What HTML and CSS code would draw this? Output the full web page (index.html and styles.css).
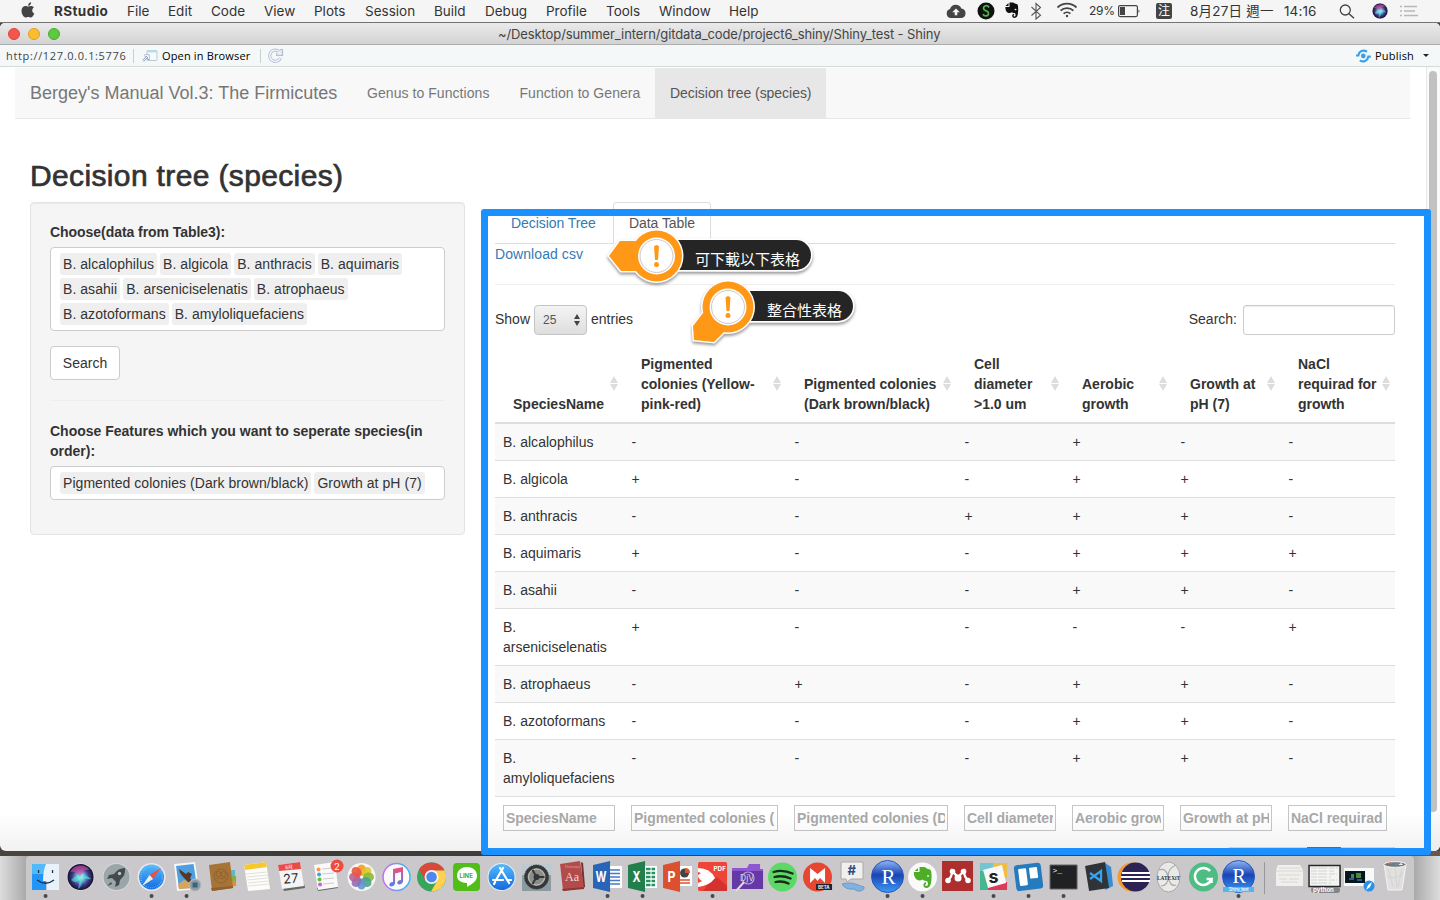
FILE: index.html
```html
<!DOCTYPE html>
<html lang="en">
<head>
<meta charset="utf-8">
<title>Shiny</title>
<link rel="stylesheet" href="styles.css">
</head>
<body>
<header class="menubar">
  <svg class="apple" viewBox="0 0 14 16"><path fill="#444" d="M9.3 2.7C10 1.900 10.200 1 10.100.2 8.600.4 7 1.700 7.200 3.900 8 3.900 8.800 3.400 9.300 2.700ZM7.300 4.500C6.400 4.500 5.700 3.900 4.500 3.900 2.400 3.900.5 5.600.5 8.800.5 12 2.700 15.500 4.500 15.500 5.500 15.500 6.100 14.900 7.300 14.900S9 15.500 9.900 15.500C11.500 15.500 12.800 12.900 13.300 11.500 10.700 10.300 10.600 6.900 12.900 5.500 11.200 3.300 8.900 3.900 7.300 4.500Z"/></svg>
  <nav class="menus"><b>RStudio</b><span>File</span><span>Edit</span><span>Code</span><span>View</span><span>Plots</span><span>Session</span><span>Build</span><span>Debug</span><span>Profile</span><span>Tools</span><span>Window</span><span>Help</span></nav>
  <div class="status">
    <svg width="22" height="22" viewBox="0 0 22 22"><path fill="#444" d="M6 18a4.600 4.600 0 0 1-1-9 6 6 0 0 1 11.300-.5A4.800 4.800 0 0 1 16.500 18Z"/><path fill="#f5f5f5" d="m11 8.500 3.800 3.800h-2.500v3H9.700v-3H7.200Z"/></svg>
    <svg width="18" height="22" viewBox="0 0 18 22"><circle cx="9" cy="11" r="8.500" fill="#111"/><path d="M12 7.500C10 4 5 6.500 7 9.500c1 1.500 5 1.500 4.500 4.500-.5 2.500-4.500 2.500-5.500.2" fill="none" stroke="#4db848" stroke-width="1.700"/></svg>
    <svg width="16" height="22" viewBox="0 0 16 22"><path fill="#111" d="M5.500 2.500h3.300c1.400 0 1.500 1 2.800 1.200 2.200.3 2.600 1 2.600 5.300 0 6-.7 9-3.700 9-3 0-3.200-4-.4-4.200v1.400c-1 0-1 1.300.3 1.300 1.600 0 1.500-3 .2-3.400-1.200-.3-2.400-.2-2.900-.8-1.200 1.500-4.900.8-5.700-1.600C1.500 9.200 1.200 8 1.500 7H5.500ZM4.500 3V6.100H1.500Z"/><ellipse cx="11.500" cy="9.500" rx="1" ry=".7" fill="#f5f5f5"/></svg>
    <svg width="12" height="22" viewBox="0 0 12 22"><path d="m1.500 7 9 8.200L6 19V3.500l4.500 4-9 8" fill="none" stroke="#555" stroke-width="1.100"/></svg>
    <svg width="22" height="22" viewBox="0 0 22 22" fill="none" stroke="#444" stroke-width="1.800"><path d="M1.500 7.500a13.500 13.500 0 0 1 19 0M4.600 10.700a9.200 9.200 0 0 1 12.800 0M7.600 13.700a5 5 0 0 1 6.800 0"/><circle cx="11" cy="16" r="1.200" fill="#444" stroke="none"/></svg>
    <span class="pct">29%</span>
    <svg width="24" height="22" viewBox="0 0 24 22"><rect x=".6" y="5.600" width="18.800" height="11" rx="1.500" fill="none" stroke="#444" stroke-width="1.200"/><path fill="#444" d="M2 7h5v8H2zM20.500 9.500q2 1.500 0 3.500z"/></svg>
    <span class="ime">注</span>
    <span class="date">8月27日 週一</span>
    <span class="time">14:16</span>
    <svg width="16" height="22" viewBox="0 0 16 22"><circle cx="6.300" cy="10" r="5" fill="none" stroke="#444" stroke-width="1.300"/><path d="m10 13.800 5 4.500" stroke="#444" stroke-width="1.500"/></svg>
    <svg width="18" height="22" viewBox="0 0 18 22"><use href="#siri" x="-5" y="-6" transform="matrix(.58 0 0 .58 1.800 2.300)"/></svg>
    <svg width="20" height="22" viewBox="0 0 20 22"><path d="M5 6.500h13M5 11h11M5 15.500h14M1 6.500h2M1 11h2M1 15.500h2" stroke="#b8b8b8" stroke-width="1.500"/></svg>
  </div>
</header>

<main class="window">
  <div class="titlebar"><i class="light red"></i><i class="light yellow"></i><i class="light green"></i><span class="title">~/Desktop/summer_intern/gitdata_code/project6_shiny/Shiny_test - Shiny</span></div>
  <div class="toolbar">
    <span class="url">http://127.0.0.1:5776</span><i class="sep"></i>
    <svg width="16" height="14" viewBox="0 0 16 14"><rect x="5" y="1.500" width="10" height="10" rx="1" fill="#f7fafb" stroke="#b9cad5"/><path d="M5 2.500h10" stroke="#b5dff1" stroke-width="2"/><path d="M1 12 6 7M2.500 6.500H6.500V11" fill="none" stroke="#91a4bc" stroke-width="2.200"/><path d="M1 12 6 7M3 6.500H6.500V10" fill="none" stroke="#edf4f8"/></svg>
    <span class="open">Open in Browser</span><i class="sep"></i>
    <svg width="17" height="16" viewBox="0 0 17 16"><path d="M13.500 9.800A5.600 5.600 0 1 1 12 3.500M14.500 1v5.500H9" fill="none" stroke="#b4c0d5" stroke-width="3.200"/><path d="M13.500 9.800A5.600 5.600 0 1 1 12 3.500M14 2v4h-4" fill="none" stroke="#f2f7fb" stroke-width="1.400"/></svg>
    <div class="publish"><svg width="17" height="14" viewBox="0 0 17 14"><circle cx="8.300" cy="7" r="2.400" fill="#3aa0e8"/><path d="M1 6.500h2.300C4 2.200 8 .3 12 2.800M15.800 7.700h-2.500C12.500 11.800 8.500 13.700 4.800 11.300" fill="none" stroke="#3aa0e8" stroke-width="2.200"/></svg><span>Publish</span><i class="caret"></i></div>
  </div>
  <div class="viewport">
    <div class="page">
      <nav class="navbar"><span class="brand">Bergey's Manual Vol.3: The Firmicutes</span><a class="l1">Genus to Functions</a><a class="l2">Function to Genera</a><a class="active">Decision tree (species)</a></nav>
      <h2>Decision tree (species)</h2>
      <div class="row">
        <aside class="well">
          <label>Choose(data from Table3):</label>
          <div class="selectize"><span>B. alcalophilus</span><span>B. algicola</span><span>B. anthracis</span><span>B. aquimaris</span><span>B. asahii</span><span>B. arseniciselenatis</span><span>B. atrophaeus</span><span>B. azotoformans</span><span>B. amyloliquefaciens</span></div>
          <button class="btn">Search</button>
          <hr>
          <label>Choose Features which you want to seperate species(in order):</label>
          <div class="selectize"><span>Pigmented colonies (Dark brown/black)</span><span>Growth at pH (7)</span></div>
        </aside>
        <section class="panel">
          <div class="tabs"><a>Decision Tree</a><a class="on">Data Table</a></div>
          <a class="download">Download csv</a>
          <hr>
          <div class="controls"><span class="word">Show</span><div class="select">25<svg width="6" height="12" viewBox="0 0 6 12"><path fill="#444" d="M3 0 6 5H0ZM0 7h6L3 12Z"/></svg></div><span class="word">entries</span><span class="word slabel">Search:</span><div class="sinput"></div></div>
          <table>
            <colgroup><col class="c1"><col class="c2"><col class="c3"><col class="c4"><col class="c4"><col class="c4"><col class="c7"></colgroup>
            <thead><tr><th>SpeciesName</th><th>Pigmented<br>colonies (Yellow-<br>pink-red)</th><th>Pigmented colonies<br>(Dark brown/black)</th><th>Cell<br>diameter<br>&gt;1.0 um</th><th>Aerobic<br>growth</th><th>Growth at<br>pH (7)</th><th>NaCl<br>requirad for<br>growth</th></tr></thead>
            <tbody>
              <tr><td>B. alcalophilus</td><td>-</td><td>-</td><td>-</td><td>+</td><td>-</td><td>-</td></tr>
              <tr><td>B. algicola</td><td>+</td><td>-</td><td>-</td><td>+</td><td>+</td><td>-</td></tr>
              <tr><td>B. anthracis</td><td>-</td><td>-</td><td>+</td><td>+</td><td>+</td><td>-</td></tr>
              <tr><td>B. aquimaris</td><td>+</td><td>-</td><td>-</td><td>+</td><td>+</td><td>+</td></tr>
              <tr><td>B. asahii</td><td>-</td><td>-</td><td>-</td><td>+</td><td>+</td><td>-</td></tr>
              <tr><td>B.<br>arseniciselenatis</td><td>+</td><td>-</td><td>-</td><td>-</td><td>-</td><td>+</td></tr>
              <tr><td>B. atrophaeus</td><td>-</td><td>+</td><td>-</td><td>+</td><td>+</td><td>-</td></tr>
              <tr><td>B. azotoformans</td><td>-</td><td>-</td><td>-</td><td>+</td><td>+</td><td>-</td></tr>
              <tr><td>B.<br>amyloliquefaciens</td><td>-</td><td>-</td><td>-</td><td>+</td><td>+</td><td>-</td></tr>
            </tbody>
            <tfoot><tr><td><div class="filter"><span>SpeciesName</span></div></td><td><div class="filter"><span>Pigmented colonies (</span></div></td><td><div class="filter"><span>Pigmented colonies (D</span></div></td><td><div class="filter"><span>Cell diameter</span></div></td><td><div class="filter"><span>Aerobic grow</span></div></td><td><div class="filter"><span>Growth at pH</span></div></td><td><div class="filter"><span>NaCl requirad</span></div></td></tr></tfoot>
          </table>
          <div class="pager"><i></i></div>
        </section>
      </div>
    </div>
    <div class="scroll"><i></i></div>
    <div class="shade"></div>
  </div>
</main>

<footer class="desktop">
  <div class="dock">
    <svg viewBox="0 0 35 44"><path fill="#2196f8" d="M4 8h14v26H4z"/><path fill="#52baf9" d="M4 8h14v10H4z"/><path fill="#e9f1fa" d="M18 8h13v26H19q0-5-.5-9h-3.500Q15 14 18 8Z"/><path d="M10.500 14v3M24.500 14v3M9 24q8.500 6.500 17 0" fill="none" stroke="#173452" stroke-width="1.300"/><circle cx="17.500" cy="40" r="2" fill="#4a484b"/></svg>
    <svg viewBox="0 0 35 44"><defs><radialGradient id="sg"><stop offset="0" stop-color="#fff"/><stop offset=".3" stop-color="#65c6de"/><stop offset=".65" stop-color="#423787"/><stop offset="1" stop-color="#10122d"/></radialGradient><linearGradient id="blue" x2="0" y2="1"><stop stop-color="#55baf7"/><stop offset="1" stop-color="#126be2"/></linearGradient><linearGradient id="rb" x2="0" y2="1"><stop stop-color="#8eb8f5"/><stop offset=".45" stop-color="#1b43b5"/><stop offset="1" stop-color="#3b9cf5"/></linearGradient></defs><g id="siri"><circle cx="17.500" cy="21" r="13.800" fill="#d8d8dc"/><circle cx="17.500" cy="21" r="13" fill="url(#sg)"/><path fill="#e349a2" opacity=".6" d="M7 16q5-8 14-6 5 2 5 4-5-2-9 7-4-6-10-5Z"/><path fill="#55e5d8" opacity=".6" d="M17 20q-6 0-9 4 5 5 9-2l-2 11q5-3 4-12 4 3 9 2-4-5-11-3Z"/></g></svg>
    <svg viewBox="0 0 35 44"><circle cx="17.500" cy="21" r="14" fill="#d3d7d7"/><circle cx="17.500" cy="21" r="13" fill="#9ba6a8"/><path fill="#444b50" d="M26 12q-7 0-11 6l-5 1-2 4 5-1 4 4-1 5 4-2 1-5q6-5 5-12ZM12 26l-4 4 5-2Z"/><circle cx="20.500" cy="17.500" r="1.700" fill="#bbc4c5"/></svg>
    <svg viewBox="0 0 35 44"><circle cx="17.500" cy="21" r="14" fill="#e7e9ed"/><circle cx="17.500" cy="21" r="12.500" fill="url(#blue)"/><circle cx="17.500" cy="21" r="10.800" fill="none" stroke="#8cceff" stroke-width="1.500" stroke-dasharray=".5 1.500"/><path fill="#ef4d45" d="m27 12-8 11-3.500-4Z"/><path fill="#eee" d="M8 30l7.500-11 3.500 4Z"/><circle cx="17.500" cy="40" r="2" fill="#4a484b"/></svg>
    <svg viewBox="0 0 35 44"><path fill="#f7f7f4" d="m5 8 21-2 4 27-22 2Z"/><path fill="#4e9fdf" d="m7 10 17.500-2 3.500 23-18 2Z"/><path fill="#d5a55d" d="m9 28 6-4 9 4 3 4-17 1Z"/><path fill="#573725" d="m10 13 7 5 2-2 4 2-2 4 3 5-5-1-5-5-3-4Z"/><circle cx="26" cy="29" r="5.800" fill="#8c9aa3" stroke="#b4b4b6" stroke-width="1.200"/><path fill="#37677f" d="M23.500 26.500h5v5h-5z"/><circle cx="17.500" cy="40" r="2" fill="#4a484b"/></svg>
    <svg viewBox="0 0 35 44"><path fill="#5bb9cf" d="M27 14h4v6h-4z"/><path fill="#88ad3f" d="M27 20h5v5h-4z"/><path fill="#e58c35" d="M28 25h4v5h-4z"/><path fill="#a67437" d="m5 9 21-3 3 26-21 3Z"/><path fill="#8e602c" d="m7 32 22-2v2L8 35Z"/><g fill="none" stroke="#8b602f" stroke-width=".8"><circle cx="17" cy="20" r="7"/><circle cx="14.500" cy="18" r="2.500"/><circle cx="19.500" cy="18" r="2.500"/><path d="M11 24q3-4 6-1 4-3 6 0"/></g></svg>
    <svg viewBox="0 0 35 44"><path fill="#fdfcf8" d="m5 9 22-3 4 27-22 2Z"/><path fill="#f7c72e" d="m5 9 22-3 .8 5L6 14Z"/><path stroke="#d9d9d6" stroke-width=".8" d="m7 18 21-2M8 21l21-2M8 24l21-2M9 27l21-2M9 30l21-2"/></svg>
    <svg viewBox="0 0 35 44"><path fill="#68686a" d="m8 30 22-2 1 4-21 3Z"/><path fill="#f5f5f5" d="m4 9 22-3 4 24-22 3Z"/><path fill="#e84b48" d="m4 9 22-3 1 7-22 2Z"/><text x="11" y="13" fill="#fff" font-size="5" transform="rotate(-5 15 12)" class="cjk">8月</text><text x="9" y="27" font-size="13" fill="#333" transform="rotate(-5 17 22)" class="ui">27</text></svg>
    <svg viewBox="0 0 35 44"><path fill="#666" d="m8 32 20-2 1 2-20 3Z"/><path fill="#fafafa" d="m5 9 21-3 3 25-20 3Z"/><path stroke="#ccc" d="m13 13 12-1M13 18l12-1M14 23l11-1M14 28l11-1"/><circle cx="9.500" cy="13.500" r="2" fill="#ff9634"/><circle cx="10" cy="18.500" r="2" fill="#37a8e8"/><circle cx="10.500" cy="23.500" r="2" fill="#66bd36"/><circle cx="11" cy="28.500" r="2" fill="#bf69d7"/><circle cx="28" cy="10" r="6.500" fill="#f14b3f"/><text x="25" y="13.500" fill="#fff" font-size="9.500" class="ui">2</text></svg>
    <svg viewBox="0 0 35 44"><circle cx="17.500" cy="21" r="14" fill="#f7f7f7"/><g fill-opacity=".9"><ellipse cx="17.500" cy="14" rx="4.500" ry="5.500" fill="#f89925"/><ellipse cx="17.500" cy="14" rx="4.500" ry="5.500" fill="#dfc72b" transform="rotate(45 17.500 21)"/><ellipse cx="17.500" cy="14" rx="4.500" ry="5.500" fill="#8cb83d" transform="rotate(90 17.500 21)"/><ellipse cx="17.500" cy="14" rx="4.500" ry="5.500" fill="#4aa582" transform="rotate(135 17.500 21)"/><ellipse cx="17.500" cy="14" rx="4.500" ry="5.500" fill="#6098cc" transform="rotate(180 17.500 21)"/><ellipse cx="17.500" cy="14" rx="4.500" ry="5.500" fill="#8a71b7" transform="rotate(225 17.500 21)"/><ellipse cx="17.500" cy="14" rx="4.500" ry="5.500" fill="#bd5f92" transform="rotate(270 17.500 21)"/><ellipse cx="17.500" cy="14" rx="4.500" ry="5.500" fill="#e9573f" transform="rotate(315 17.500 21)"/></g></svg>
    <svg viewBox="0 0 35 44"><defs><linearGradient id="tune" x2="0" y2="1"><stop stop-color="#f54d77"/><stop offset="1" stop-color="#4d83f2"/></linearGradient><linearGradient id="ring"><stop stop-color="#c76df1"/><stop offset="1" stop-color="#37bbee"/></linearGradient></defs><circle cx="17.500" cy="21" r="13.500" fill="#fafafa" stroke="url(#ring)" stroke-width="1.500"/><path fill="url(#tune)" d="M14 13 24 11v14.500q-1 3-4 3-3-1-1-3.500 1-1 3-1V16l-6 1.500v10q-1 3-4 3-3-1-1-3.500 1-1 3-1Z"/></svg>
    <svg viewBox="0 0 35 44"><circle cx="17.500" cy="21" r="14.500" fill="#39a55a"/><path fill="#d9483c" d="M5 13.600A14.500 14.500 0 0 1 30 13.600L30 15H18L11.500 25Z"/><path fill="#ffd151" d="M30.500 14.500A14.500 14.500 0 0 1 17 35.500l6.500-11.500q2-6-5-9.500Z"/><circle cx="17.500" cy="21" r="7" fill="#f4f4f4"/><circle cx="17.500" cy="21" r="5.300" fill="#4c88ef"/></svg>
    <svg viewBox="0 0 35 44"><rect x="4" y="7" width="27" height="28" rx="4" fill="#50bd18"/><path fill="#fff" d="M8 20c0-12 20-12 20 0 0 5-5 8-10 11v-4C12 27 8 24 8 20Z"/><text x="10.500" y="22" font-size="6" font-weight="bold" fill="#50a91e" class="ui">LINE</text></svg>
    <svg viewBox="0 0 35 44"><circle cx="17.500" cy="21" r="14" fill="#e8edf2"/><circle cx="17.500" cy="21" r="13" fill="url(#blue)"/><path d="m16 12 9 15M19 12l-7 12M11 26l-1 2M9 24h10M23 24h4" fill="none" stroke="#fff" stroke-width="2.200" stroke-linecap="round"/></svg>
    <svg viewBox="0 0 35 44"><path fill="#8c9ba1" d="M3 8h29v27H3z"/><path fill="#bdc9ce" d="M3 8h29v11H3z"/><circle cx="17.500" cy="21" r="10.500" fill="#8c8c88" stroke="#343637" stroke-width="3"/><circle cx="17.500" cy="21" r="12" fill="none" stroke="#343637" stroke-dasharray="1.500 1"/><circle cx="17.500" cy="21" r="8" fill="none" stroke="#c2c2be"/><circle cx="17.500" cy="21" r="3" fill="#343637"/><path d="m17.500 21 8 0M17.500 21l-4-7M17.500 21l-4 7" stroke="#343637" stroke-width="2"/></svg>
    <svg viewBox="0 0 35 44"><path fill="#762f31" d="m26 6 2 1 2 24-2 1Z"/><path fill="#b34b4b" d="m5 8 20-3 4 27-21 3Z"/><path fill="#8d3537" d="m7 33 22-2v2L8 35Z"/><text x="10" y="25" font-size="12" fill="#f1dada" class="serif">Aa</text><text x="10" y="12" font-size="3.500" fill="#e0a3a1" class="serif">Dictionary</text></svg>
    <svg viewBox="0 0 35 44"><path fill="#fff" d="M18 10h14v22H18z"/><path d="M20 14h10M20 17.500h10M20 21h10M20 24.500h10M20 28h10" stroke="#477ac3" stroke-width="1.500"/><path fill="#2865b6" d="m3 9 17-4v31L3 32Z"/><text x="5.500" y="26" font-size="14" font-weight="bold" fill="#fff" class="ui" textLength="11" lengthAdjust="spacingAndGlyphs">W</text><circle cx="17.500" cy="40" r="2" fill="#4a484b"/></svg>
    <svg viewBox="0 0 35 44"><path fill="#fff" d="M18 10h14v22H18z"/><path d="M21 13h9M21 17h9M21 21h9M21 25h9M21 29h9" stroke="#279260" stroke-width="2.500"/><path d="M26 10v22" stroke="#fff"/><path fill="#227f4b" d="m3 9 17-4v31L3 32Z"/><text x="7.500" y="26" font-size="14" font-weight="bold" fill="#fff" class="ui" textLength="8" lengthAdjust="spacingAndGlyphs">X</text><circle cx="17.500" cy="40" r="2" fill="#4a484b"/></svg>
    <svg viewBox="0 0 35 44"><path fill="#fff" d="M18 10h14v20H18z"/><circle cx="24.500" cy="17" r="4.500" fill="#444"/><path fill="#dd5234" d="M25 17v-5q5 0 5 5Z"/><path d="M20 24h10M20 27h10" stroke="#dd5234" stroke-width="1.300"/><path fill="#db5030" d="m3 9 17-4v31L3 32Z"/><text x="7.500" y="26" font-size="14" font-weight="bold" fill="#fff" class="ui" textLength="8" lengthAdjust="spacingAndGlyphs">P</text></svg>
    <svg viewBox="0 0 35 44"><rect x="3" y="6" width="29" height="29" rx="1.500" fill="#ef4438"/><path fill="#d3332c" d="m13 28 9-7 10 9v5H8Z"/><path d="M3 12q12 0 17 10-6 8-17 9v-4l4-2Q3 23 3 19l3-2-3-1Z" fill="#fff"/><text x="18.500" y="14.500" font-size="6.300" font-weight="bold" fill="#fff" class="ui">PDF</text><circle cx="17.500" cy="40" r="2" fill="#4a484b"/></svg>
    <svg viewBox="0 0 35 44"><path fill="#9055d3" d="M2 12h15l2-4h11v5h3v20H2Z"/><path fill="#6538a5" d="M2 15h31v18H2Z"/><text x="10" y="25" font-size="8.500" fill="#ddd" class="ui">DjV</text><circle cx="18" cy="22" r="6" fill="none" stroke="#b8a4e2" stroke-width="1.200"/><path d="M14 26 6 35" stroke="#ddd" stroke-width="2"/></svg>
    <svg viewBox="0 0 35 44"><circle cx="17.500" cy="21" r="14.500" fill="#5bd866"/><path d="M8.500 16q9-3 19 1.500M9.500 21q8-2 16 1.500M10.500 26q7-1.500 13 1.500" fill="none" stroke="#172a1b" stroke-width="2.300" stroke-linecap="round"/></svg>
    <svg viewBox="0 0 35 44"><circle cx="17.500" cy="21" r="14.500" fill="#e94632"/><path fill="#fff" d="m10 12 7.500 6 7.500-6v15l-5-5-2.500 3-2.500-3-5 5Z"/><path fill="#23242a" d="M16 28h16v6H16z"/><text x="18" y="33" font-size="4.500" font-weight="bold" fill="#eee" class="ui">BETA</text></svg>
    <svg viewBox="0 0 35 44"><path fill="#f0f0ee" stroke="#aaa" d="M6 6h22v17H16l-4 3-1-3H6Z"/><text x="12.500" y="19" font-size="13" font-weight="bold" fill="#2e4d82" class="ui">#</text><path d="M7 28q9-2 13 0 6 2 9 3 1 2-3 4-4 1-7-2-9 1-12-5Z" fill="#83b1dd" stroke="#6c9bc7"/></svg>
    <svg viewBox="0 0 35 44"><circle cx="17.500" cy="20.500" r="16" fill="url(#rb)" stroke="#2356bf"/><text x="11.500" y="28" font-size="21" fill="#fff" class="serif">R</text><circle cx="17.500" cy="40" r="2" fill="#4a484b"/></svg>
    <svg viewBox="0 0 35 44"><circle cx="17.500" cy="21" r="14.500" fill="#fafafa"/><path fill="#4ead27" d="M14.500 11h4.500c1.500 0 2 1.500 4 2 3 .5 3.500 1.500 3.500 7 0 7-1 12-5 12s-4-5.500-.5-6v2c-1.200 0-1.200 2 .3 2 2.500 0 2-4.500 0-5-2-.4-3-.5-3.800-1.500-2.500 2-6.500 1-8-3-.5-1.500-1-3-.5-4.500h5.500ZM13 12v3H9.500Z"/><ellipse cx="23" cy="20" rx="1.200" ry=".8" fill="#fff"/><circle cx="17.500" cy="40" r="2" fill="#4a484b"/></svg>
    <svg viewBox="0 0 35 44"><path fill="#ae2d2d" d="M2 5h31v30H2z"/><path d="M8 24q4-3 4-9l6 6 6-6q0 6 4 9" fill="none" stroke="#fff" stroke-width="2.300"/><g fill="#fff"><circle cx="8" cy="24.500" r="2.800"/><circle cx="12.500" cy="15.500" r="2.800"/><circle cx="18" cy="22" r="3.500"/><circle cx="23.500" cy="15.500" r="2.800"/><circle cx="28" cy="24.500" r="2.800"/></g></svg>
    <svg viewBox="0 0 35 44"><path fill="#42b790" d="M4 7h10v27H4z"/><path fill="#75c4d1" d="M4 7h14v8H4z"/><path fill="#efbd43" d="M17 7h14v15H17z"/><path fill="#db3b57" d="M12 26h19v8H12z"/><path fill="#f9f9f9" d="m7 14 19-5 4 18-18 5Z"/><text x="12.500" y="27" font-size="18" font-weight="bold" fill="#222" class="ui">s</text><circle cx="17.500" cy="40" r="2" fill="#4a484b"/></svg>
    <svg viewBox="0 0 35 44"><g transform="rotate(-7 17 21)"><rect x="4" y="8" width="27" height="26" rx="3" fill="#247bbd"/><rect x="8" y="12" width="8" height="17" rx="1" fill="#fff"/><rect x="19" y="12" width="8" height="11" rx="1" fill="#fff"/></g><circle cx="17.500" cy="40" r="2" fill="#4a484b"/></svg>
    <svg viewBox="0 0 35 44"><path fill="#202122" stroke="#626365" d="M4 9h27v24H4z"/><text x="6.500" y="17" font-size="8" fill="#fff" class="mono">&gt;_</text><circle cx="17.500" cy="40" r="2" fill="#4a484b"/></svg>
    <svg viewBox="0 0 35 44"><path fill="#368dcf" d="m24 7 6 4 2 19-8 4Z"/><path fill="#303337" d="m4 10 20-4 4 26-20 3Z"/><path d="m9 17 11 8V15L9 23" fill="none" stroke="#37a4ef" stroke-width="2.200"/></svg>
    <svg viewBox="0 0 35 44"><circle cx="16" cy="21" r="14.500" fill="#f29a32"/><circle cx="19.500" cy="21" r="14.500" fill="#2d2254"/><path d="M6 17h28M5 21h29M6 25h28" stroke="#fff" stroke-width="1.800"/></svg>
    <svg viewBox="0 0 35 44"><ellipse cx="17.500" cy="21" rx="11.500" ry="15" fill="#e9e9e7" stroke="#aaa"/><path d="M10 30q7 0 7-9t8-12M8 14q7-3 9 7t8 8" fill="none" stroke="#aaa" stroke-width="1.200"/><text x="6" y="23.500" font-size="7" font-weight="bold" fill="#333" class="serif" textLength="23" lengthAdjust="spacingAndGlyphs">LATEXiT</text></svg>
    <svg viewBox="0 0 35 44"><circle cx="17.500" cy="21" r="14.500" fill="#4dbd83"/><path d="M24 15a8.500 8.500 0 1 0 1.500 8h-5m5 4v-5" fill="none" stroke="#fff" stroke-width="2.500"/></svg>
    <svg viewBox="0 0 35 44"><circle cx="17.500" cy="20.500" r="16" fill="url(#rb)" stroke="#2356bf"/><text x="11.500" y="27" font-size="20" fill="#fff" class="serif">R</text><path fill="#51b5ee" d="M2 31h31v5H2z"/><text x="7.500" y="35.300" font-size="5" fill="#fff" class="ui" textLength="20">Shiny_test</text><circle cx="17.500" cy="40" r="2" fill="#4a484b"/></svg>
    <i class="docksep"></i>
    <svg viewBox="0 0 35 44"><path fill="#f0efeb" d="m6 9 22 0 3 5v16H4V14Z"/><path stroke="#d3d2ce" stroke-width=".8" d="M7 12h21M4 15h27M6 19h22M7 23h8M17 23h10M9 26h17"/></svg>
    <svg viewBox="0 0 35 44"><path fill="#f4f5f2" stroke="#282828" stroke-width="1.500" d="M2 9.500h31v21H2z"/><path stroke="#c6cbc5" stroke-width=".8" stroke-dasharray="6 1 9 2" d="M4 12h27M4 15h23M4 18h26M4 21h20M4 24h26M4 27h20"/><rect x="4" y="31" width="29" height="6" rx="3" fill="#858487"/><text x="6" y="36" font-size="6" font-weight="bold" fill="#fff" class="ui">python</text></svg>
    <svg viewBox="0 0 35 44"><path fill="#f7f8f8" d="M2 12h30v18H2z"/><path fill="#07151e" d="M3 15h20v12H3z"/><path fill="#458c42" d="M9 18h3v4H9zM14 17h5v5h-5z"/><path fill="#2a5c88" d="M7 22h5v2H7zM15 23h5v2h-5z"/><circle cx="27" cy="30" r="5.500" fill="#2b91e9"/><path fill="#fff" d="m30 26-2 5-4 3 2-5Z"/></svg>
    <svg viewBox="0 0 35 44"><path fill="#e0e0df" stroke="#f3f3f3" d="m7 8 22 0-4 26H11Z"/><ellipse cx="18" cy="8.500" rx="11" ry="2.800" fill="#777" stroke="#f4f4f4"/><path fill="#cb6f4e" d="m11 8 2-2 3 2Z"/><path fill="#5293b4" d="m17 9 2-3 2 3Z"/><path fill="#eee" d="m21 9 3-2 2 2Z"/><path d="m11 13 5 18M18 12l2 20M25 13l-4 18M10 20q8 5 16-3" fill="none" stroke="#cfcfcf" stroke-width=".8"/></svg>
  </div>
</footer>

<div class="frame"></div>
<div class="callout one">
  <svg width="212" height="64" viewBox="0 0 212 64"><g class="shadow"><path d="M70 14h121a15 15 0 0 1 0 30H70Z" fill="#252525" stroke="#fff" stroke-width="3.500" paint-order="stroke"/><circle cx="51.500" cy="30" r="27" fill="#fff"/><path d="m4 30 11-15h20v30H16Z" fill="#ff9817" stroke="#fff" stroke-width="3" paint-order="stroke"/></g><circle cx="51.500" cy="30" r="25.500" fill="#ff9817"/><circle cx="51.500" cy="30" r="18.500" fill="#fff"/><circle cx="51.500" cy="30" r="16.500" fill="#fff" stroke="#c9c9c9"/><path fill="#ff9817" d="M49 20.500q2.500-3 5 0L53 34h-3Z"/><circle cx="51.500" cy="38.500" r="2.500" fill="#ff9817"/></svg>
  <span>可下載以下表格</span>
</div>
<div class="callout two">
  <svg width="170" height="72" viewBox="0 0 170 72"><g class="shadow"><path d="M58 14h90a15 15 0 0 1 0 30H58Z" fill="#252525" stroke="#fff" stroke-width="3.500" paint-order="stroke"/><circle cx="38" cy="30" r="27" fill="#fff"/><path d="m4 63 20 2 11-11 0-14-22-4-10 13Z" fill="#ff9817" stroke="#fff" stroke-width="3" paint-order="stroke"/></g><circle cx="38" cy="30" r="25.500" fill="#ff9817"/><circle cx="38" cy="30" r="18.500" fill="#fff"/><circle cx="38" cy="30" r="16.500" fill="#fff" stroke="#c9c9c9"/><path fill="#ff9817" d="M35.500 20.500q2.500-3 5 0L39.500 34h-3Z"/><circle cx="38" cy="38.500" r="2.500" fill="#ff9817"/></svg>
  <span>整合性表格</span>
</div>
</body>
</html>
```
FILE: styles.css
```css
* { box-sizing: border-box; }
body { margin: 0; width: 1440px; height: 900px; overflow: hidden; display: flex; flex-direction: column; position: relative; background: #494541; font: 14px/20px "Liberation Sans", Arial, sans-serif; color: #333; }
svg { display: block; flex: none; }
.ui { font-family: Inter, sans-serif; }
.cjk { font-family: "Noto Sans CJK TC", sans-serif; }
.serif { font-family: "Liberation Serif", serif; }
.mono { font-family: "Liberation Mono", monospace; }
.menubar { height: 23px; flex: none; display: flex; background: #f5f5f5; border-bottom: 1px solid #737373; font: 13.5px/22px Inter, "Noto Sans CJK TC", sans-serif; color: #333; white-space: nowrap; }
.apple { width: 14px; height: 16px; margin: 2px 19px 0 21px; }
.menus { display: grid; grid-template-columns: 73px 41px 43px 53px 50px 51px 69px 51px 61px 60px 53px 70px 60px; }
.menus b { letter-spacing: .4px; }
.status { display: grid; grid-template-columns: 32px 27px 26px 26px 33px 29px 38px 34px 94px 55px 32px 28px 20px; margin-left: 156px; }
.pct { font-size: 12px; letter-spacing: -.3px; }
.ime { width: 16px; height: 16px; margin-top: 3px; border-radius: 2px; background: #444; color: #fff; font-size: 12px; line-height: 15px; text-align: center; }
.date { letter-spacing: .2px; }
.time { letter-spacing: .1px; }
.window { height: 828px; flex: none; display: flex; flex-direction: column; border-radius: 5px 5px 6px 6px; overflow: hidden; background: #fff; position: relative; }
.titlebar { height: 22px; flex: none; display: flex; gap: 8px; align-items: center; padding-left: 8px; background: linear-gradient(#eaeaea, #d3d3d3); border-bottom: 1px solid #aeaeae; }
.light { width: 12px; height: 12px; border-radius: 50%; }
.red { background: #f2564d; border: 1px solid #dc453d; }
.yellow { background: #f9bd2e; border: 1px solid #dfa023; }
.green { background: #5dc93e; border: 1px solid #48ac30; }
.title { margin-left: 430px; font: 13px/20px Inter, sans-serif; letter-spacing: -.11px; color: #444; white-space: nowrap; }
.toolbar { height: 22px; flex: none; display: flex; align-items: center; padding-left: 6px; background: #f4f8f9; border-bottom: 1px solid #d5dadd; font: 11px/20px "Open Sans", sans-serif; color: #000; white-space: nowrap; }
.url { width: 127px; color: #444; letter-spacing: .65px; }
.sep { width: 1px; height: 14px; background: #c8d0d4; margin-right: 8px; }
.open { width: 98px; margin-left: 4px; letter-spacing: .15px; }
.sep + svg + .open + .sep { margin-right: 6px; }
.publish { margin-left: auto; display: flex; align-items: center; padding-right: 11px; }
.publish span { width: 48px; margin-left: 3px; letter-spacing: .2px; }
.caret { border: 3px solid transparent; border-top: 3px solid #222; border-bottom: 0; }
.viewport { flex: 1; min-height: 0; display: flex; position: relative; }
.page { flex: 1; min-width: 0; overflow: hidden; padding: 1px 16px 0 15px; }
.scroll { width: 14px; border-left: 1px solid #e7e7e7; background: #fafafa; padding: 4px 0 0 2px; }
.scroll i { display: block; width: 8px; height: 741px; border-radius: 4px; background: #c1c1c1; }
.shade { position: absolute; left: 0; right: 0; bottom: 0; height: 38px; background: linear-gradient(rgba(0,0,0,0), rgba(0,0,0,.055)); }
.navbar { height: 51px; display: flex; background: #f8f8f8; border-bottom: 1px solid #e7e7e7; line-height: 50px; color: #777; white-space: nowrap; }
.brand { width: 337px; padding-left: 15px; font-size: 18px; }
.navbar a { padding-left: 15px; letter-spacing: .06px; }
.l1 { width: 152.500px; }
.l2 { width: 150.500px; }
.navbar .active { width: 171px; background: #e7e7e7; color: #555; letter-spacing: -.04px; }
h2 { margin: 40px 0 10px 15px; font: 400 30px/33px "Liberation Sans", Arial, sans-serif; letter-spacing: .36px; -webkit-text-stroke: .7px #333; }
.row { display: flex; gap: 30px; padding-left: 15px; }
.well { width: 435px; height: 333px; flex: none; padding: 19px; border: 1px solid #e3e3e3; border-radius: 4px; background: #f5f5f5; box-shadow: inset 0 1px 1px rgba(0,0,0,.05); }
.well label { display: block; font-weight: 700; margin-bottom: 5px; }
.well label:first-child { letter-spacing: -.05px; }
.selectize { width: 395px; display: flex; flex-wrap: wrap; gap: 3px; padding: 5px 9px; border: 1px solid #ccc; border-radius: 4px; background: #fff; white-space: nowrap; }
.selectize span { height: 22px; padding: 1px 3px; border-radius: 3px; background: #efefef; letter-spacing: .05px; }
.btn { display: block; width: 70px; height: 34px; margin-top: 15px; border: 1px solid #ccc; border-radius: 4px; background: #fff; font: 14px/20px "Liberation Sans", Arial, sans-serif; color: #333; padding: 0; }
hr { border: 0; border-top: 1px solid #eee; margin: 20px 0; }
.panel { width: 900px; flex: none; }
.tabs { display: flex; height: 42px; border-bottom: 1px solid #ddd; color: #337ab7; letter-spacing: -.06px; }
.tabs a { width: 116px; padding: 11px 16px; margin-right: 2px; white-space: nowrap; }
.tabs .on { width: 98px; height: 42px; padding: 10px 15px; border: 1px solid #ddd; border-bottom: 0; border-radius: 4px 4px 0 0; background: #fff; color: #555; }
.download { display: block; color: #337ab7; letter-spacing: .08px; }
.panel hr { margin: 20px 0; }
.controls { height: 30px; display: flex; align-items: center; }
.word { padding-bottom: 2px; }
.select { width: 53px; height: 30px; margin: 0 4px; padding: 0 6px 0 8px; display: flex; align-items: center; justify-content: space-between; border: 1px solid #c4c4c4; border-radius: 4px; background: linear-gradient(#f4f4f4, #dedede); font-size: 12px; color: #555; }
.slabel { margin-left: auto; }
.sinput { width: 152px; height: 30px; margin-left: 6px; border: 1px solid #ccc; border-radius: 3px; box-shadow: inset 0 1px 1px rgba(0,0,0,.075); }
table { width: 900px; margin-top: 11px; table-layout: fixed; border-collapse: separate; border-spacing: 0; }
.c1 { width: 128px; } .c2 { width: 163px; } .c3 { width: 170px; } .c4 { width: 108px; } .c7 { width: 115px; }
th { position: relative; padding: 8px 0 8px 18px; text-align: left; vertical-align: bottom; border-bottom: 2px solid #ddd; white-space: nowrap; }
th::before, th::after { content: ""; position: absolute; right: 5.500px; border: 4.500px solid transparent; }
th::before { bottom: 39px; border-bottom: 7px solid #ddd; border-top: 0; }
th::after { bottom: 31px; border-top: 7px solid #ddd; border-bottom: 0; }
td { padding: 8px; vertical-align: top; border-top: 1px solid #ddd; white-space: nowrap; letter-spacing: .02px; }
tbody td + td { padding-left: 8.500px; }
tbody tr:first-child td { border-top: 0; }
tbody tr:nth-child(odd) { background: #f9f9f9; }
.filter { height: 26px; padding: 2px; border: 1px solid #c6c6c6; background: #fff; font-weight: 700; color: #a9a9a9; letter-spacing: -.03px; }
.filter span { display: block; overflow: hidden; }
.pager { width: 166px; height: 6px; margin: 8px 0 0 auto; padding-left: 78px; border-top: 1px solid #ddd; }
.pager i { display: block; width: 34px; height: 5px; margin-top: -1px; background: #337ab7; }
.desktop { flex: 1; padding: 5px 26px 0; background: linear-gradient(90deg, #4b4540 0, #3d3c38 20%, #454340 80%, #66574f) 0 0 / 100% 5px no-repeat, linear-gradient(90deg, #ddd, #aaa 26px, #aaa 1414px, #ddd); }
.dock { height: 44px; padding-left: 2.400px; display: flex; border-radius: 4px 4px 0 0; background: #cbc8cb; }
.dock svg { width: 35.080px; height: 44px; }
.docksep { width: 1px; height: 32px; margin: 6px 7px 0 7.500px; background: #99979a; }
.frame { position: absolute; left: 481px; top: 209px; width: 950px; height: 646px; border: 7px solid #1b90ff; border-radius: 3px; }
.callout { position: absolute; color: #fff; font: 15px/20px "Noto Sans CJK TC", sans-serif; white-space: nowrap; }
.callout span { position: absolute; }
.one { left: 605px; top: 226px; }
.one span { left: 90px; top: 23px; }
.two { left: 690px; top: 277px; }
.two span { left: 77px; top: 23px; }
.shadow { filter: drop-shadow(0 2px 1.500px rgba(0,0,0,.4)); }
```
